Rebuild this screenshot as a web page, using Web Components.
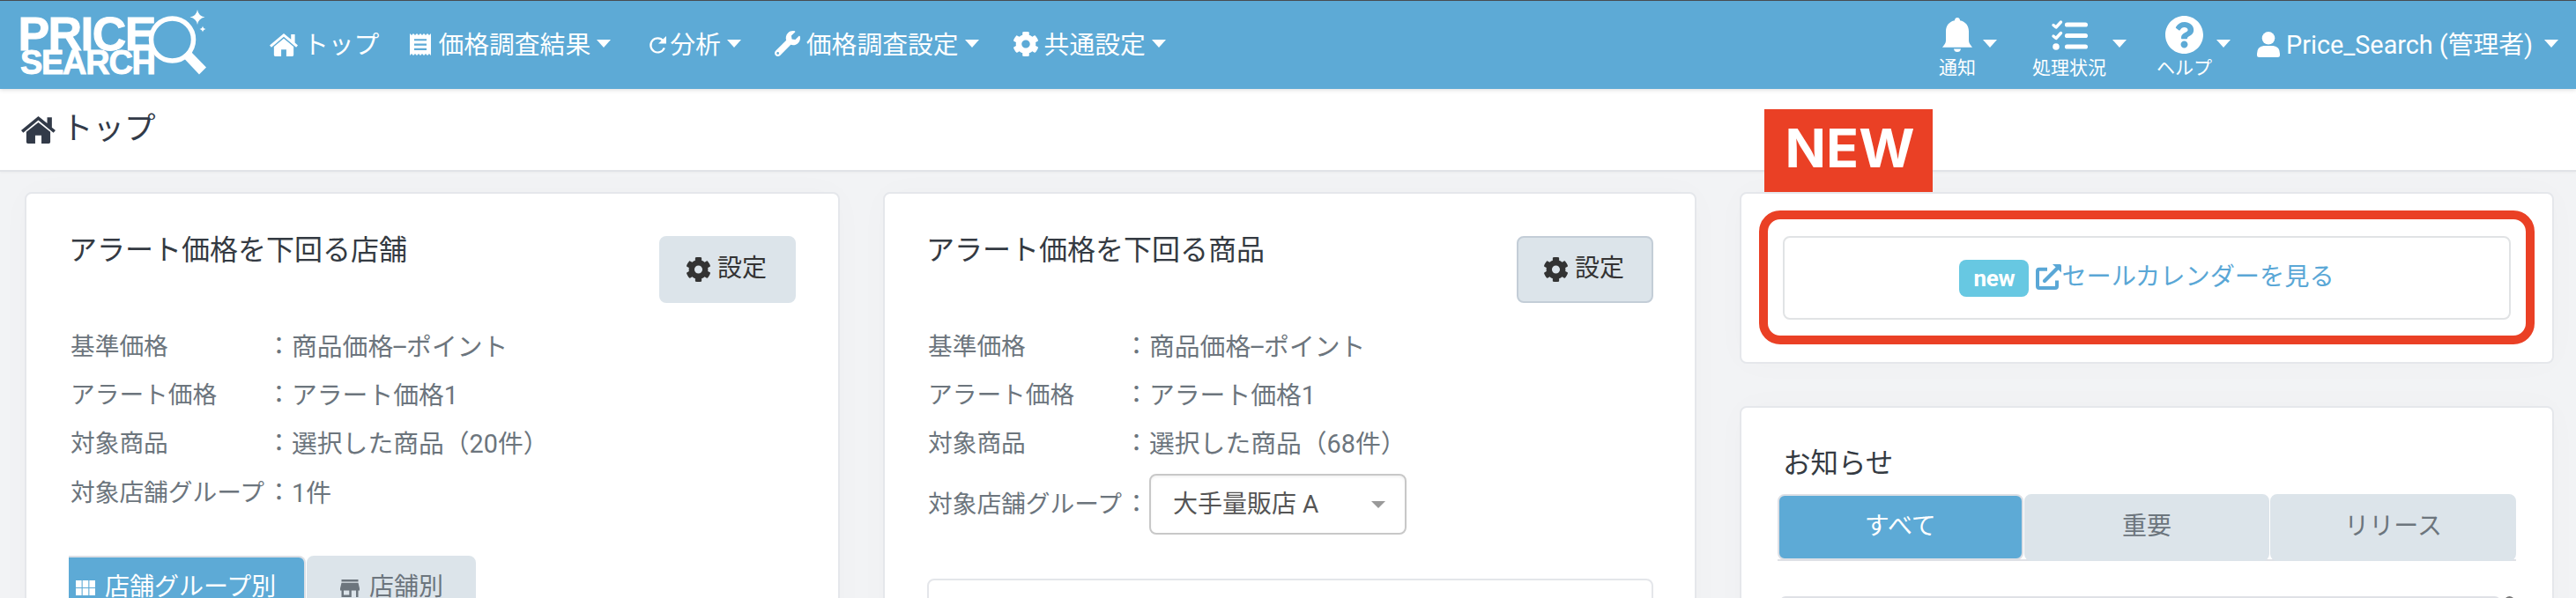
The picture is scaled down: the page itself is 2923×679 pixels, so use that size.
<!DOCTYPE html>
<html lang="ja">
<head>
<meta charset="utf-8">
<title>トップ</title>
<style>
html,body{margin:0;height:679px;overflow:hidden}
body{font-family:Roboto,"Noto Sans CJK JP",sans-serif;background:#f2f3f5;color:#32363f}
</style>
</head>
<body>
<ps-app></ps-app>
<script>
const define = (name, css, html) => customElements.define(name, class extends HTMLElement {
  constructor() {
    super();
    const render = typeof html === 'function' ? html(this) : html;
    this.attachShadow({mode: 'open'}).innerHTML = `<style>*{box-sizing:border-box}${css}</style>${render}`;
  }
});

const ICONS = {
  home: ['0 0 33 27', '<path d="M16.5 0 25 7V1h4.5v10L33 14l-2 2.3L16.5 4 2 16.3 0 14Z"/><path d="M16.5 6 28 15.5V25.5a1.5 1.5 0 0 1-1.5 1.5H19.5V19h-6v8H6.5A1.5 1.5 0 0 1 5 25.5V15.5Z"/>'],
  list: ['0 0 24 26', '<path fill-rule="evenodd" d="M0 0 2 2 4 0 6 2 8 0 10 2 12 0 14 2 16 0 18 2 20 0 22 2 24 0V26L22 24 20 26 18 24 16 26 14 24 12 26 10 24 8 26 6 24 4 26 2 24 0 26ZM5 6.5V8.700H19V6.500ZM5 12V14.200H19V12ZM5 17.500V19.700H19V17.500Z"/>'],
  refresh: ['0 0 20 20', '<path d="M16.500 5.500A8 8.500 0 1 0 17.800 14" fill="none" stroke="currentColor" stroke-width="2.300"/><path d="M20 0V9H11Z"/>'],
  wrench: ['0 0 512 512', '<path d="M507.730 109.100c-2.240-9.030-13.540-12.090-20.120-5.510l-74.360 74.360-67.880-11.310-11.310-67.880 74.360-74.360c6.620-6.620 3.430-17.900-5.660-20.160-47.380-11.740-99.550.910-136.580 37.930-39.640 39.640-50.550 97.100-34.050 147.200L18.740 402.760c-24.990 24.990-24.990 65.510 0 90.500 24.990 24.990 65.510 24.990 90.500 0l213.210-213.210c50.120 16.710 107.470 5.680 147.370-34.220 37.070-37.070 49.700-89.320 37.910-136.730zM64 472c-13.250 0-24-10.750-24-24 0-13.260 10.750-24 24-24s24 10.740 24 24c0 13.250-10.750 24-24 24z"/>'],
  gear: ['18 8 476 496', '<path d="M487.400 315.700l-42.600-24.600c4.300-23.200 4.300-47 0-70.200l42.600-24.600c4.900-2.800 7.100-8.600 5.500-14-11.100-35.600-30-67.800-54.700-94.600-3.800-4.100-10-5.100-14.800-2.300L380.800 110c-17.900-15.400-38.500-27.300-60.800-35.100V25.800c0-5.600-3.900-10.500-9.400-11.700-36.700-8.200-74.300-7.800-109.200 0-5.500 1.200-9.400 6.100-9.400 11.700V75c-22.200 7.900-42.800 19.800-60.800 35.100L88.700 85.500c-4.900-2.800-11-1.900-14.800 2.300-24.700 26.700-43.600 58.900-54.700 94.600-1.700 5.400.6 11.200 5.500 14L67.300 221c-4.300 23.200-4.300 47 0 70.200l-42.600 24.600c-4.900 2.800-7.100 8.600-5.500 14 11.100 35.600 30 67.800 54.700 94.600 3.800 4.100 10 5.100 14.800 2.300l42.600-24.600c17.900 15.400 38.500 27.300 60.800 35.100v49.200c0 5.600 3.900 10.500 9.400 11.700 36.700 8.200 74.300 7.800 109.200 0 5.500-1.200 9.400-6.100 9.400-11.700v-49.200c22.200-7.900 42.800-19.800 60.800-35.100l42.600 24.600c4.900 2.800 11 1.900 14.800-2.300 24.700-26.700 43.600-58.900 54.700-94.600 1.500-5.500-.7-11.300-5.600-14.100zM256 336c-44.100 0-80-35.900-80-80s35.900-80 80-80 80 35.900 80 80-35.900 80-80 80z"/>'],
  bell: ['0 0 34 39', '<path d="M17 0C19 0 20 1.300 20 3.200 26 4.300 30 9 30 15.500V26C30 29 31.500 30.500 34 33.800H0C2.500 30.500 4 29 4 26V15.500C4 9 8 4.300 14 3.200 14 1.300 15 0 17 0ZM13 35.500H21Q20.500 39 17 39T13 35.500Z"/>'],
  tasks: ['0 0 41 34', '<g fill="none" stroke="currentColor"><path stroke-width="3.400" stroke-linecap="round" stroke-linejoin="round" d="M2 5.500 5 8 10.500 2M2 18 5 20.500 10.500 14.500"/><path stroke-width="5.200" stroke-linecap="round" d="M17.500 5H38.400M17.500 17.500H38.400M17.500 30H38.400"/></g><circle cx="5" cy="30" r="3.800"/>'],
  help: ['8 8 496 496', '<path d="M504 256c0 136.997-111.043 248-248 248S8 392.997 8 256C8 119.083 119.043 8 256 8s248 111.083 248 248zM262.655 90c-54.497 0-89.255 22.957-116.549 63.758-3.536 5.286-2.353 12.415 2.715 16.258l34.699 26.310c5.205 3.947 12.621 3.008 16.665-2.122 17.864-22.658 30.113-35.797 57.303-35.797 20.429 0 45.698 13.148 45.698 32.958 0 14.976-12.363 22.667-32.534 33.976C247.128 238.528 216 254.941 216 296v4c0 6.627 5.373 12 12 12h56c6.627 0 12-5.373 12-12v-1.333c0-28.462 83.186-29.647 83.186-106.667 0-58.002-60.165-102-116.531-102zM256 338c-25.365 0-46 20.635-46 46 0 25.364 20.635 46 46 46s46-20.636 46-46c0-25.365-20.635-46-46-46z"/>'],
  user: ['0 0 26 29', '<circle cx="13" cy="7.300" r="7.300"/><path d="M7.500 16H18.500Q26 17 26 25V26.500A2.500 2.500 0 0 1 23.500 29H2.500A2.500 2.500 0 0 1 0 26.500V25Q0 17 7.500 16Z"/>'],
  caret: ['0 0 16 9', '<path d="M0 0H16L8 9Z"/>'],
  external: ['0 0 29 29', '<path fill="none" stroke="currentColor" stroke-width="4" stroke-linejoin="round" d="M13 5.700H4Q2 5.700 2 7.500V25Q2 27 4 27H22Q24 27 24 25V18.500"/><path fill="none" stroke="currentColor" stroke-width="4.200" stroke-linecap="round" d="M10 19 24 5"/><path d="M19 0H27.500Q29 0 29 1.500V9.500Z"/>'],
  grid: ['0 0 22 17', '<path d="M0 0H6.600V8H0ZM7.700 0H14.300V8H7.700ZM15.400 0H22V8H15.400ZM0 9H6.600V17H0ZM7.700 9H14.300V17H7.700ZM15.400 9H22V17H15.400Z"/>'],
  store: ['0 0 22 20', '<path fill-rule="evenodd" d="M1.500 0H20.500V2.500H1.500ZM1.500 3.700H20.500L22 10V12.500H20.500V20H18V12.500H12.800V20H1.500V12.500H0V10ZM4 12.500V17.500H10.300V12.500Z"/>']
};

define('ps-icon', ':host{display:block;flex:none}svg{display:block;fill:currentColor;overflow:visible}', el => {
  const [box, art] = ICONS[el.getAttribute('name')];
  return `<svg width="${el.getAttribute('w')}" height="${el.getAttribute('h')}" viewBox="${box}" preserveAspectRatio="none">${art}</svg>`;
});

define('ps-logo', ':host{display:block;width:240px;height:100px}svg{display:block}', `
<svg width="240" height="100" viewBox="0 1 240 100" fill="#fff" font-family="Liberation Sans,sans-serif" font-weight="700">
<g stroke="#fff" stroke-width=".9"><text x="20.500" y="56.500" font-size="53.500" textLength="157" lengthAdjust="spacing">PRICE</text>
<text x="23" y="83.500" font-size="38" textLength="154" lengthAdjust="spacing">SEARCH</text></g>
<circle cx="195.500" cy="45" r="24" fill="#5daad6" stroke="#fff" stroke-width="5.500"/>
<path d="M209 66.500 216.500 58.500 234 76.500 226 84.500Z"/>
<path d="M224 11Q225 18 232.500 19.500 225 21 224 28 223 21 215.500 19.500 223 18 224 11ZM230 29.500Q230.500 32.500 233.500 33 230.500 33.500 230 36.500 229.500 33.500 226.500 33 229.500 32.500 230 29.500Z"/>
</svg>`);

define('ps-nav-item', `
:host{display:flex;align-items:center;height:100px;font-size:28.8px;line-height:40px;white-space:nowrap;margin-left:var(--before,0);flex:none}
.t{margin-left:var(--gap,7px);margin-top:-1px;width:var(--tw,auto)}
.c{margin:-3px 0 0 7px}
.i{margin-top:var(--shift,-1px)}`, el => {
  const [n, w, h] = el.getAttribute('icon').split(' ');
  return `<ps-icon class="i" name="${n}" w="${w}" h="${h}"></ps-icon><span class="t"><slot></slot></span>` +
    (el.hasAttribute('menu') ? '<ps-icon class="c" name="caret" w="16" h="9"></ps-icon>' : '');
});

define('ps-nav-tool', `
:host{display:flex;align-items:center;height:100px;margin-left:var(--before,0);flex:none}
.s{display:flex;flex-direction:column;align-items:center;height:100px;padding-top:14px;font-size:21px;line-height:26px;white-space:nowrap}
.i{height:49px;display:flex;align-items:center}
.c{margin:-3px 0 0 var(--gap,8px)}`, el => {
  const [n, w, h] = el.getAttribute('icon').split(' ');
  return `<div class="s"><div class="i"><ps-icon name="${n}" w="${w}" h="${h}"></ps-icon></div><slot></slot></div><ps-icon class="c" name="caret" w="16" h="9"></ps-icon>`;
});

define('ps-header', `
:host{display:flex;height:101px;background:#5daad6;border-top:1px solid #484b50;color:#fff;box-shadow:0 1px 5px rgba(0,0,0,.15);position:relative;box-sizing:border-box}
.r{display:flex;margin-left:auto;padding-right:20px}`, `
<ps-logo></ps-logo>
<ps-nav-item icon="home 32 26" style="--before:66px;--gap:6px">トップ</ps-nav-item>
<ps-nav-item menu icon="list 24 25" style="--before:35px;--gap:8px">価格調査結果</ps-nav-item>
<ps-nav-item menu icon="refresh 20 19" style="--before:43px;--gap:4px">分析</ps-nav-item>
<ps-nav-item menu icon="wrench 29 29" style="--before:38px;--gap:7px;--shift:-3px">価格調査設定</ps-nav-item>
<ps-nav-item menu icon="gear 28 28" style="--before:39px;--gap:7px;--shift:-3px">共通設定</ps-nav-item>
<div class="r">
<ps-nav-tool icon="bell 34 39">通知</ps-nav-tool>
<ps-nav-tool icon="tasks 41 34" style="--before:40px;--gap:7px">処理状況</ps-nav-tool>
<ps-nav-tool icon="help 43 43" style="--before:34px;--gap:5px">ヘルプ</ps-nav-tool>
<ps-nav-item menu icon="user 26 29" style="--before:30px;--gap:7px;--tw:286px">Price_Search (管理者)</ps-nav-item>
</div>`);

define('ps-title', `
:host{display:flex;align-items:center;height:94px;padding:0 24px 2px;background:#fff;border-bottom:2px solid #e1e3e7;box-shadow:0 1px 3px rgba(0,0,0,.04);font-size:35.5px;line-height:50px;color:#323a48;box-sizing:border-box}
ps-icon{margin-top:2px}span{margin-left:7px}`, `<ps-icon name="home" w="39" h="31"></ps-icon><span><slot></slot></span>`);

define('ps-card', `
:host{display:block;background:#fff;border:2px solid #e5e7eb;border-radius:8px;box-shadow:0 0 40px rgba(60,70,100,.02)}`, '<slot></slot>');

define('ps-button', `
:host{display:flex;align-items:center;gap:8px;width:155px;height:76px;padding:0 0 2px 29px;background:#dce4ea;border:2px solid var(--line,#dce4ea);border-radius:8px;color:#333;font-size:28px;line-height:40px;box-sizing:border-box;flex:none}
ps-icon{margin-top:2px}`, '<ps-icon name="gear" w="27" h="28"></ps-icon><span><slot></slot></span>');

define('ps-card-head', `
:host{display:flex;justify-content:space-between;align-items:flex-start;height:76px}
h2{margin:0 0 0 -2px;font-size:32px;font-weight:400;line-height:32px;color:#343a42}`, `<h2><slot></slot></h2><slot name="action"></slot>`);

define('ps-row', `
:host{display:flex;align-items:center;height:var(--h,55.3px);font-size:28.8px;line-height:40px;color:#6c757d;white-space:nowrap}
.l{width:222.5px;font-size:27.7px}.c{width:28.5px;font-size:28px}`, el => `<span class="l">${el.getAttribute('label')}</span><span class="c">：</span><slot></slot>`);

define('ps-select', `
:host{display:flex;align-items:center;justify-content:space-between;width:292px;height:69px;border:2px solid #c8c8c8;border-radius:8px;background:#fff;color:#555;font-size:28px;padding:0 22px 0 25px;box-sizing:border-box;box-shadow:inset 0 2px 3px rgba(0,0,0,.05)}
ps-icon{color:#999}`, '<slot></slot><ps-icon name="caret" w="16" h="8"></ps-icon>');

define('ps-tab', `
:host{display:flex;align-items:center;justify-content:center;background:#dce4ea;border:2px solid #dce4ea;border-radius:8px;color:#6c757d;font-size:28px;line-height:40px;box-sizing:border-box;white-space:nowrap}
:host([active]){background:#5daad6;border-color:#dcdfe5;color:#fff}`, '<slot></slot>');

define('ps-stores', `
:host{display:block;width:925px}
ps-card{height:520px;padding:48px 48px 0 50px;box-sizing:border-box}
.rows{padding:22px 0 0}
.dash{margin:0 -2px}
.tabs{display:flex;margin:43.8px 0 0 -2px;height:74px;gap:1px}
ps-tab{justify-content:flex-start}
.a{width:269px;border-left:0;border-radius:0 8px 8px 0;padding-left:8px}
.b{width:192px;padding-left:36px}
ps-tab span{margin-left:11px;margin-top:-1px}`, `
<ps-card><ps-card-head>アラート価格を下回る店舗<ps-button slot="action">設定</ps-button></ps-card-head>
<div class="rows"><ps-row label="基準価格">商品価格<span class="dash">–</span>ポイント</ps-row><ps-row label="アラート価格">アラート価格1</ps-row><ps-row label="対象商品">選択した商品（20件）</ps-row><ps-row label="対象店舗グループ">1件</ps-row></div>
<div class="tabs"><ps-tab class="a" active><ps-icon name="grid" w="22" h="17"></ps-icon><span>店舗グループ別</span></ps-tab><ps-tab class="b"><ps-icon name="store" w="22" h="20"></ps-icon><span>店舗別</span></ps-tab></div></ps-card>`);

define('ps-products', `
:host{display:block;width:923px;margin-left:49px}
ps-card{height:520px;padding:48px 47px 0 49px;box-sizing:border-box}
ps-button{--line:#c3cdd7}
.rows{padding:22px 0 0}
.dash{margin:0 -2px}
.last{--h:76px;margin-top:3px}
.panel{height:80px;margin:46px 0 0 -1px;border:2px solid #e4e6ea;border-radius:8px}`, `
<ps-card><ps-card-head>アラート価格を下回る商品<ps-button slot="action">設定</ps-button></ps-card-head>
<div class="rows"><ps-row label="基準価格">商品価格<span class="dash">–</span>ポイント</ps-row><ps-row label="アラート価格">アラート価格1</ps-row><ps-row label="対象商品">選択した商品（68件）</ps-row><ps-row class="last" label="対象店舗グループ"><ps-select>大手量販店 A</ps-select></ps-row></div>
<div class="panel"></div></ps-card>`);

define('ps-sale', `
:host{display:block}
ps-card{height:195px;padding:48px 47px;position:relative;box-sizing:border-box}
.link{display:flex;align-items:center;justify-content:center;height:95px;border:2px solid #e1e3e5;border-radius:8px;color:#5aa7d6;font-size:28.2px;line-height:40px;white-space:nowrap;padding-right:1px}
.badge{width:79px;height:42px;margin:0 8px 0 1px;border-radius:8px;background:#67c8e2;color:#fff;font-weight:700;font-size:26px;line-height:43px;text-align:center;letter-spacing:-.3px}
ps-icon{margin-top:-3px}.t{margin-top:-2px}
.ring{position:absolute;left:20px;top:19px;width:880px;height:152px;border:10px solid #ea4025;border-radius:24px}
.new{position:absolute;left:26px;top:-96px;width:191px;height:94px;background:#ea4025;color:#fff;font:700 61px/88px Inter,sans-serif;text-align:center;padding-left:3px}`, `
<ps-card><div class="link"><span class="badge">new</span><ps-icon name="external" w="29" h="29"></ps-icon><span class="t">セールカレンダーを見る</span></div><div class="ring"></div><div class="new">NEW</div></ps-card>`);

define('ps-news', `
:host{display:block;margin-top:48px}
ps-card{height:280px;padding:46px 41px 0;box-sizing:border-box}
h2{margin:0;padding-left:6px;height:52px;font-size:31.500px;font-weight:400;line-height:36px;color:#343a42}
.tabs{display:grid;grid-template-columns:1fr 1fr 1fr;gap:1px;height:76px;border-bottom:2px solid #dfe1e6}
ps-tab{height:76px;padding-bottom:2px}ps-tab[active]{height:75px}
.list{display:flex;justify-content:space-between;margin-top:40px;padding:0 2px 0 3px}
.box{width:817px;height:40px;border:2px solid #dfe1e6;border-radius:6px}
.bar{width:11px;height:20px;border-radius:6px;background:#777}`, `
<ps-card><h2>お知らせ</h2><div class="tabs"><ps-tab active>すべて</ps-tab><ps-tab>重要</ps-tab><ps-tab>リリース</ps-tab></div><div class="list"><div class="box"></div><div class="bar"></div></div></ps-card>`);

define('ps-app', `
:host{display:block;width:2923px;height:679px;overflow:hidden}
main{display:flex;padding:23px 0 0 28px}
aside{width:924px;margin-left:49px}`, `
<ps-header></ps-header><ps-title>トップ</ps-title>
<main><ps-stores></ps-stores><ps-products></ps-products><aside><ps-sale></ps-sale><ps-news></ps-news></aside></main>`);
</script>
</body>
</html>
